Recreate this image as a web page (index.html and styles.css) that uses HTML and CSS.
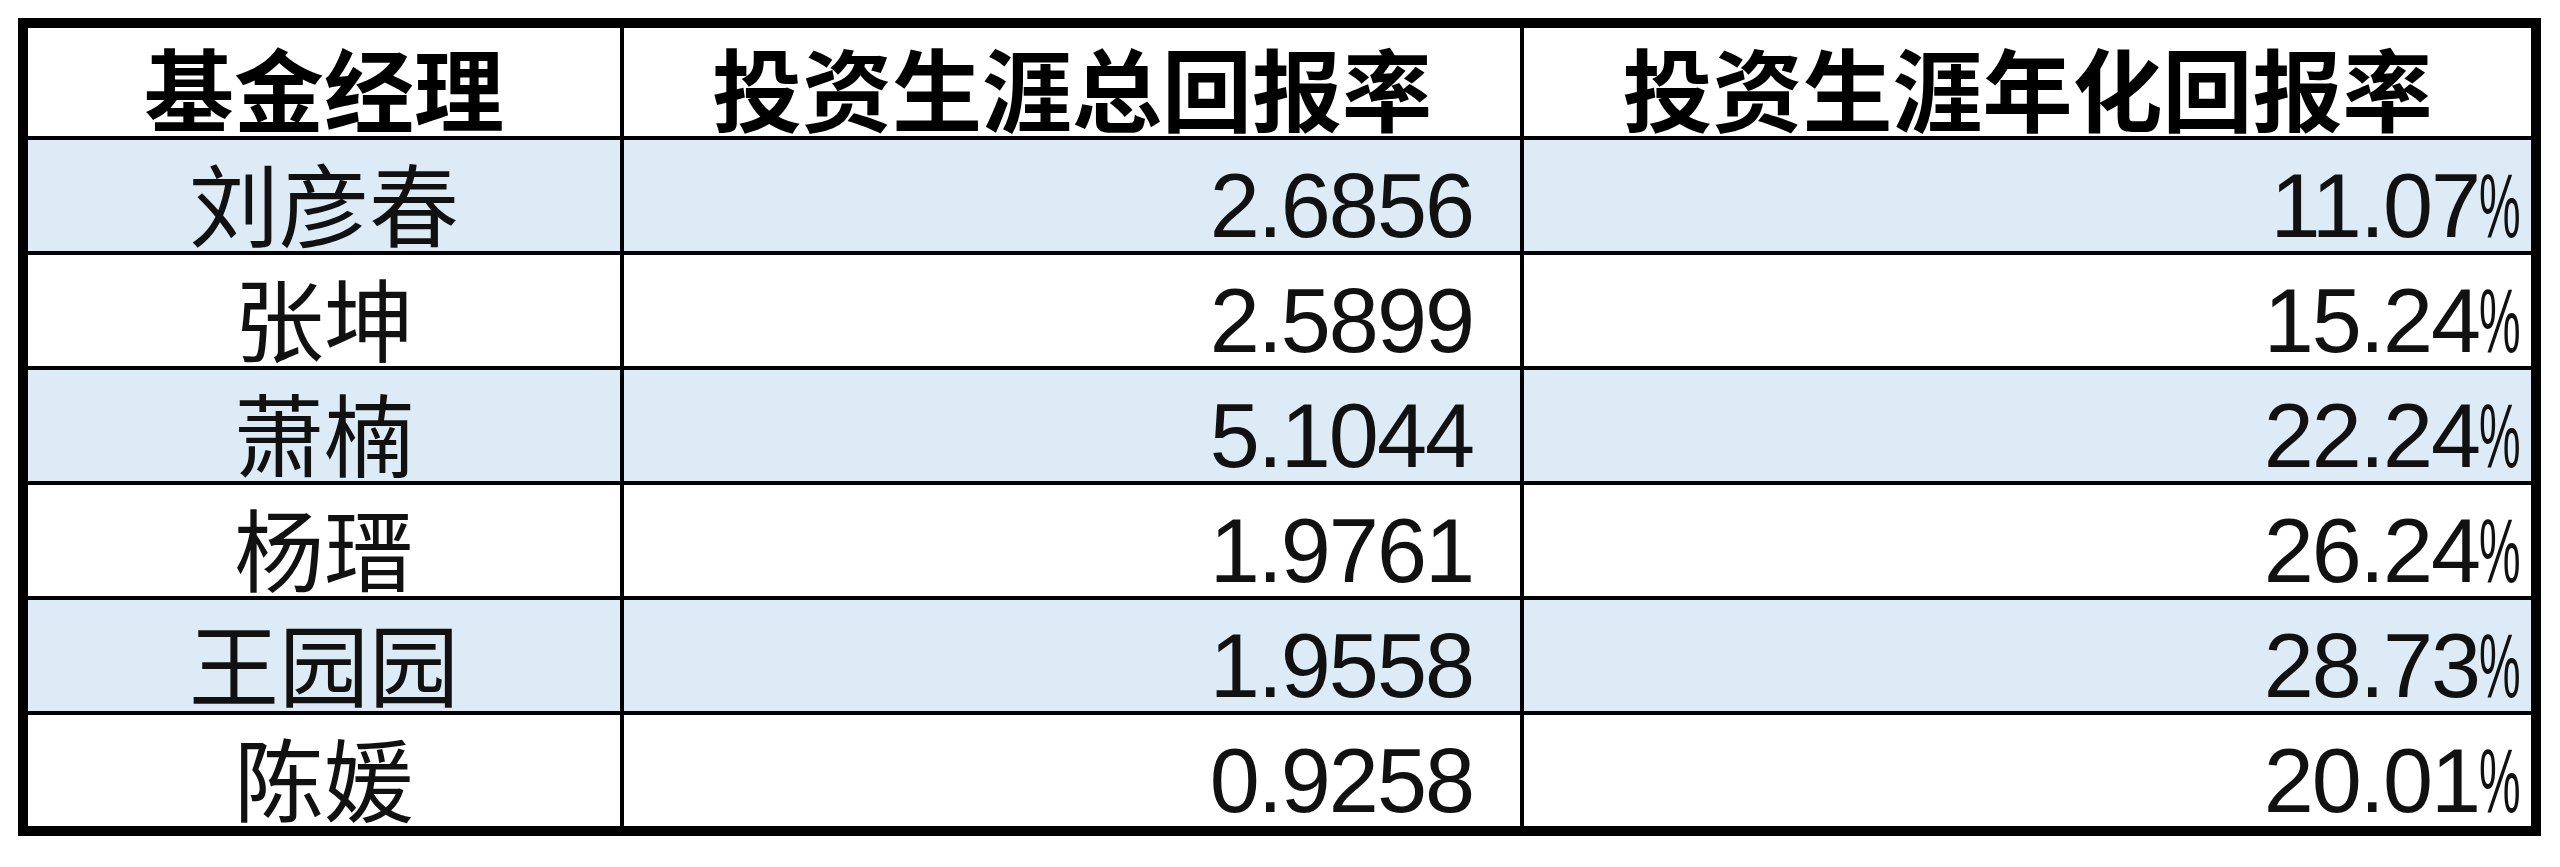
FILE: index.html
```html
<!DOCTYPE html>
<html lang="zh-CN">
<head>
<meta charset="utf-8">
<title>基金经理投资生涯回报率</title>
<link rel="stylesheet" href="styles.css">
</head>
<body>
<div class="sheet">
  <table class="grid">
    <colgroup>
      <col class="c-name">
      <col class="c-total">
      <col class="c-annual">
    </colgroup>
    <thead>
      <tr class="head">
        <th class="name">基金经理</th>
        <th>投资生涯总回报率</th>
        <th>投资生涯年化回报率</th>
      </tr>
    </thead>
    <tbody>
      <tr class="band"><td class="name">刘彦春</td><td class="num total">2.6856</td><td class="num annual">11.07<span class="pct">%</span></td></tr>
      <tr><td class="name">张坤</td><td class="num total">2.5899</td><td class="num annual">15.24<span class="pct">%</span></td></tr>
      <tr class="band"><td class="name">萧楠</td><td class="num total">5.1044</td><td class="num annual">22.24<span class="pct">%</span></td></tr>
      <tr><td class="name">杨瑨</td><td class="num total">1.9761</td><td class="num annual">26.24<span class="pct">%</span></td></tr>
      <tr class="band"><td class="name">王园园</td><td class="num total">1.9558</td><td class="num annual">28.73<span class="pct">%</span></td></tr>
      <tr><td class="name">陈媛</td><td class="num total">0.9258</td><td class="num annual">20.01<span class="pct">%</span></td></tr>
    </tbody>
  </table>
</div>
</body>
</html>
```
FILE: styles.css
```css
html, body {
  margin: 0;
  padding: 0;
  background: #ffffff;
}

.sheet {
  padding: 18px 0 0 18px;
}

.grid {
  border: 10px solid #000;
  border-collapse: separate;
  border-spacing: 0;
  table-layout: fixed;
  width: 2523px;
  font-family: "Liberation Sans", "Noto Sans CJK SC", sans-serif;
  font-size: 90px;
  color: #000;
}

.c-name { width: 596px; }
.c-total { width: 900px; }
.c-annual { width: 1007px; }

.grid th,
.grid td {
  padding: 0;
  border-right: 4px solid #000;
  border-bottom: 4px solid #000;
  height: 111px;
  line-height: 90px;
  vertical-align: bottom;
  white-space: nowrap;
}

.grid th:last-child,
.grid td:last-child {
  border-right: none;
}

.grid tbody tr:last-child td {
  border-bottom: none;
}

.head th {
  height: 110px;
  font-family: "Noto Sans CJK SC", sans-serif;
  font-weight: 700;
  text-align: center;
  vertical-align: middle;
  line-height: 100px;
  padding-top: 8px;
  box-sizing: border-box;
}

.band td {
  background: #ddebf7;
}

td.name {
  text-align: center;
  font-family: "Noto Sans CJK SC", sans-serif;
  font-weight: 400;
  color: #111;
  vertical-align: middle;
  line-height: 100px;
  padding-top: 10px;
  box-sizing: border-box;
}

td.num {
  text-align: right;
  letter-spacing: -2px;
  padding-bottom: 0;
  color: #111;
}

td.total {
  padding-right: 47px;
}

td.annual {
  padding-right: 10px;
}

.pct {
  display: inline-block;
  letter-spacing: 0;
  width: 80px;
  margin-right: -38px;
  transform: scaleX(0.52);
  transform-origin: left center;
}
```
